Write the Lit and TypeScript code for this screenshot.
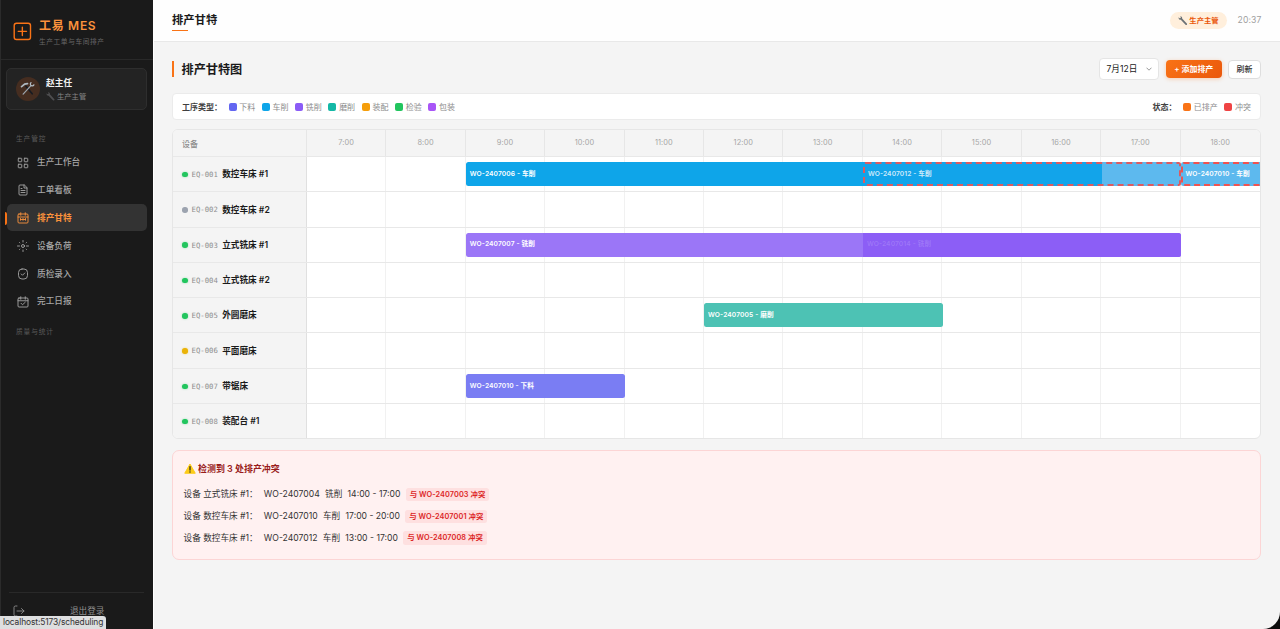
import { LitElement, html, svg, css } from "lit";
import { customElement } from "lit/decorators.js";
import { classMap } from "lit/directives/class-map.js";

interface Bar {
  from: number;
  span: number;
  text: string;
  kind: string;
}

interface Machine {
  id: string;
  name: string;
  state: string;
  bars: Bar[];
}

const HOURS = [7, 8, 9, 10, 11, 12, 13, 14, 15, 16, 17, 18];

const MACHINES: Machine[] = [
  {
    id: "EQ-001", name: "数控车床 #1", state: "ok",
    bars: [
      { from: 9, span: 8, text: "WO-2407006 - 车削", kind: "turn" },
      { from: 14, span: 4, text: "WO-2407012 - 车削", kind: "turn conflict under" },
      { from: 18, span: 1, text: "WO-2407010 - 车削", kind: "turn conflict cut" },
    ],
  },
  { id: "EQ-002", name: "数控车床 #2", state: "idle", bars: [] },
  {
    id: "EQ-003", name: "立式铣床 #1", state: "ok",
    bars: [
      { from: 9, span: 9, text: "WO-2407007 - 铣削", kind: "mill" },
      { from: 14, span: 4, text: "WO-2407014 - 铣削", kind: "mill deep" },
    ],
  },
  { id: "EQ-004", name: "立式铣床 #2", state: "ok", bars: [] },
  {
    id: "EQ-005", name: "外圆磨床", state: "ok",
    bars: [{ from: 12, span: 3, text: "WO-2407005 - 磨削", kind: "grind" }],
  },
  { id: "EQ-006", name: "平面磨床", state: "warn", bars: [] },
  {
    id: "EQ-007", name: "带锯床", state: "ok",
    bars: [{ from: 9, span: 2, text: "WO-2407010 - 下料", kind: "saw" }],
  },
  { id: "EQ-008", name: "装配台 #1", state: "ok", bars: [] },
];

const TYPES = [
  ["下料", "#6366f1"], ["车削", "#0ea5e9"], ["铣削", "#8b5cf6"], ["磨削", "#14b8a6"],
  ["装配", "#f59e0b"], ["检验", "#22c55e"], ["包装", "#a855f7"],
];

const STATES = [["已排产", "#f97316"], ["冲突", "#ef4444"]];

const CONFLICTS = [
  ["设备 立式铣床 #1：", "WO-2407004", "铣削", "14:00 - 17:00", "与 WO-2407003 冲突"],
  ["设备 数控车床 #1：", "WO-2407010", "车削", "17:00 - 20:00", "与 WO-2407001 冲突"],
  ["设备 数控车床 #1：", "WO-2407012", "车削", "13:00 - 17:00", "与 WO-2407008 冲突"],
];

const ICONS: Record<string, unknown> = {
  grid: svg`<rect x="2.5" y="2.5" width="7" height="7" rx="1"/><rect x="14.5" y="2.5" width="7" height="7" rx="1"/><rect x="2.5" y="14.5" width="7" height="7" rx="1"/><rect x="14.5" y="14.5" width="7" height="7" rx="1"/>`,
  doc: svg`<path d="M14 2H6a2 2 0 0 0-2 2v16a2 2 0 0 0 2 2h12a2 2 0 0 0 2-2V8z"/><path d="M14 2v6h6M8 9h2M8 13h8M8 17h8"/>`,
  gantt: svg`<rect x="2" y="4" width="20" height="18" rx="2"/><path d="M7.500 1.500v5M16.500 1.500v5M2 10h20M7 15h10M7 13v3.500M12 13v3.500M17 13v3.500"/>`,
  target: svg`<circle cx="12" cy="12" r="3"/><path d="M12 1v3M12 20v3M1 12h4M19 12h4M5 5l.8.8M18.200 18.200l.8.8M5 19l.8-.8M18.200 5.800l.8-.8"/>`,
  check: svg`<rect x="3" y="2" width="18" height="20" rx="7"/><path d="M8.500 12l2.500 2.500 4.500-4.500"/>`,
  report: svg`<rect x="2" y="4" width="20" height="18" rx="2"/><path d="M7.500 1.500v5M16.500 1.500v5M2 9.500h20M8 14.500l3 3 5.500-5"/>`,
};

const NAV = [
  ["grid", "生产工作台"], ["doc", "工单看板"], ["gantt", "排产甘特"],
  ["target", "设备负荷"], ["check", "质检录入"], ["report", "完工日报"],
];

const wrench = (cls: string) => html`<svg class=${cls} viewBox="0 0 24 24">
  <path fill="currentColor" d="M1.500 3.200 4 5.700l2.500-.8.600-2.400L5 .7c3-.8 6.200 1.700 5.400 5.300L22.300 19.200c1.700 2.400-1.100 5-3.300 3.200L7 9.700C3.700 10.300.7 7 1.500 3.200z"/>
</svg>`;

@customElement("app-root")
export class AppRoot extends LitElement {
  static styles = css`
    :host { display: block; height: 629px; overflow: hidden; position: relative; background: #0c0c0c;
      font-family: Inter, "Noto Sans CJK SC", sans-serif; color: #1a1a1a; line-height: 1; }
    * { box-sizing: border-box; }
    .shell { display: flex; height: 629px; }
    .side { width: 153px; flex: none; background: #1a1a1a; border-left: 1px solid #2b2b2b;
      display: flex; flex-direction: column; }
    .brand { display: flex; align-items: center; gap: 7px; height: 60px; padding: 5px 0 0 12px;
      border-bottom: 1px solid #292929; }
    .mark { width: 19px; height: 19px; flex: none; margin-top: -2px; }
    .brand-text { display: flex; flex-direction: column; gap: 5px; padding-top: 1px; }
    .brand-name { font-size: 12px; font-weight: 600; letter-spacing: .7px; color: #fb923c; height: 14px; line-height: 14px; white-space: nowrap; }
    .brand-sub { font-size: 6.700px; letter-spacing: .6px; color: #676767; height: 9px; line-height: 9px; white-space: nowrap; }
    .user { margin: 8px 6px 0 5px; height: 41.500px; border: 1px solid #2e2e2e; border-radius: 5px;
      background: #232323; display: flex; align-items: center; gap: 6.500px; padding-left: 8.500px; }
    .avatar { width: 24px; height: 24px; border-radius: 50%; background: #452d20; display: flex; align-items: center; justify-content: center; }
    .tools { width: 15px; height: 15px; }
    .user-text { display: flex; flex-direction: column; gap: 4px; padding-top: 1px; }
    .user-name { font-size: 8.700px; font-weight: 600; color: #f0f0f0; height: 10px; line-height: 10px; }
    .user-role { display: flex; align-items: center; gap: 2px; font-size: 7.300px; color: #858585; height: 9px; }
    .wr-dim { width: 9px; height: 9px; color: #4e4e50; }
    .group { font-size: 6.700px; letter-spacing: .9px; color: #5b5b5b; padding-left: 15px; height: 9px; line-height: 9px; }
    .group-a { margin-top: 25px; margin-bottom: 5px; }
    .group-b { margin-top: 13px; }
    .nav { display: flex; flex-direction: column; gap: .85px; padding: 0 6.500px 0 6px; }
    .item { height: 27px; border-radius: 5px; display: flex; align-items: center; gap: 8.500px; padding: 1px 0 0 9.500px;
      color: #a6a6a6; font-size: 8.650px; font-weight: 500; position: relative; }
    .item-on { background: #333; color: #fb923c; font-weight: 600; }
    .item-on::before { content: ""; position: absolute; left: -2px; top: 7.500px; width: 2px; height: 13px; background: #f97316; border-radius: 0 2px 2px 0; }
    .ico { width: 12px; height: 12px; fill: none; stroke: currentColor; stroke-width: 1.800; stroke-linecap: round; stroke-linejoin: round; }
    .logout { margin: auto 9px 0 8px; height: 37px; border-top: 1px solid #292929; display: flex; align-items: flex-start;
      padding: 11.500px 0 0 3.500px; color: #8f8f8f; font-size: 8.650px; line-height: 12px; }
    .logout-text { flex: 1; text-align: center; padding-left: 6px; }
    .main { flex: 1; min-width: 0; background: #f4f4f4; border-left: 1px solid #fff; border-radius: 0 0 17px 0; height: 628.500px; }
    .top { height: 41.500px; background: #fefefe; border-bottom: 1px solid #e8e8e8; display: flex; align-items: center; padding: 0 19px 0 18px; }
    .crumb { font-size: 11.300px; font-weight: 600; height: 24px; line-height: 17px; padding-top: 4px; position: relative; }
    .crumb::after { content: ""; position: absolute; left: 0; bottom: 1px; width: 16px; height: 1.300px; background: #f97316; }
    .grow { flex: 1; }
    .role { height: 16.500px; width: 57px; border-radius: 9px; background: #ffefdc; color: #ea580c; display: flex; align-items: center;
      justify-content: center; gap: 1.500px; font-size: 7.350px; font-weight: 600; margin-right: 10.500px; }
    .wr { width: 9.500px; height: 9.500px; color: #6c7276; }
    .clock { font-size: 8.600px; color: #a0a0a0; letter-spacing: .15px; width: 23.500px; white-space: nowrap; }
    .content { padding: 16.500px 19px 0 18px; }
    .head { display: flex; align-items: center; height: 22px; }
    .accent { width: 2px; height: 16px; background: #f97316; margin-right: 7.500px; }
    .title { font-size: 12.150px; font-weight: 600; height: 16px; line-height: 17px; }
    .select { width: 60px; height: 22px; border: 1px solid #e5e5e5; border-radius: 4px; background: #fff; display: flex; align-items: center;
      justify-content: space-between; padding: 0 6px 0 6.500px; font-size: 8.600px; white-space: nowrap; }
    .chev { width: 6px; height: 6px; fill: none; stroke: #999; stroke-width: 1; }
    .add { width: 55.500px; height: 18.500px; border-radius: 4px; margin-left: 7px; background: linear-gradient(135deg, #f97316, #ea580c); color: #fff;
      font-size: 7.950px; font-weight: 600; display: flex; align-items: center; justify-content: center; box-shadow: 0 1px 4px rgba(249,115,22,.3); white-space: nowrap; padding-top: 1px; }
    .refresh { width: 33px; height: 19px; margin-left: 6.500px; border: 1px solid #dedede; border-radius: 4px; background: #fff; font-size: 7.950px;
      font-weight: 500; display: flex; align-items: center; justify-content: center; color: #333; padding-top: 1px; }
    .legend { margin-top: 12.500px; height: 27.500px; background: #fff; border: 1px solid #ebebeb; border-radius: 4px; display: flex; align-items: center;
      padding: 1px 9px 0; gap: 6.650px; font-size: 8px; color: #8c8c8c; }
    .legend-label { font-weight: 600; color: #404040; width: 40px; white-space: nowrap; }
    .legend-short { width: 24px; }
    .key { display: flex; align-items: center; gap: 2.650px; white-space: nowrap; }
    .swatch { width: 8px; height: 8px; border-radius: 2px; }
    .gantt { margin-top: 9.300px; background: #fff; border: 1px solid #e6e6e6; border-radius: 6px; overflow: hidden; }
    .row { display: flex; height: 35.320px; border-bottom: 1px solid #e8e8e8; }
    .row-last { border-bottom: 0; height: 34px; }
    .row-head { height: 26.600px; background: #f4f4f4; }
    .label { width: 134px; flex: none; background: #f4f4f4; border-right: 1px solid #e0e0e0; display: flex; align-items: center; padding: 1px 0 0 9px; }
    .label-head { font-size: 8px; font-weight: 500; color: #8c8c8c; border-right-color: #e6e6e6; }
    .track { flex: 1; display: grid; grid-template-columns: repeat(12, 1fr); grid-template-rows: 100%; align-items: center; min-width: 0; }
    .cell { grid-row: 1; align-self: stretch; border-right: 1px solid #f1f1f1; }
    .hour { border-right: 1px solid #e6e6e6; display: flex; align-items: center; justify-content: center; font-size: 7.400px; letter-spacing: .1px; color: #a6a6a6; }
    .cell-last { border-right: 0; }
    .dot { width: 5.500px; height: 5.500px; border-radius: 50%; margin-right: 4px; }
    .dot-ok { background: #22c55e; box-shadow: 0 0 2px rgba(34,197,94,.5); }
    .dot-idle { background: #9ca3af; }
    .dot-warn { background: #eab308; box-shadow: 0 0 2px rgba(234,179,8,.5); }
    .eq { font-family: "DejaVu Sans Mono", monospace; font-size: 7.300px; color: #8f8f8f; width: 30.700px; white-space: nowrap; }
    .machine { font-size: 8.650px; font-weight: 600; white-space: nowrap; }
    .bar { grid-row: 1; height: 24px; border-radius: 2.500px; color: #fff; font-size: 6.650px; font-weight: 600; letter-spacing: .12px; display: flex; align-items: center;
      padding-left: 4px; white-space: nowrap; overflow: hidden; margin-right: -.5px; }
    .turn { background: #0ea5e9; z-index: 2; }
    .conflict { border: 2px dashed #ef5350; background: #5db9ee; padding-left: 3px; }
    .under { z-index: 3; color: rgba(255,255,255,.8); background: linear-gradient(90deg, #12a4ea 75%, #5db9ee 75%) border-box; border-color: #dd5a60; }
    .cut { border-right: 0; border-radius: 2.500px 0 0 2.500px; z-index: 3; margin-right: 0; }
    .mill { background: #9b76f7; }
    .deep { background: #8c5ef6; color: rgba(255,255,255,.16); border-radius: 0 2.500px 2.500px 0; z-index: 2; }
    .grind { background: #4dc2b4; }
    .saw { background: #7a7df3; }
    .alert { margin-top: 11px; height: 110px; border: 1px solid #fcd5d5; border-radius: 7px; background: #fff1f1; padding: 12.500px 10.500px; }
    .alert-head { display: flex; align-items: center; gap: 2.500px; font-size: 8.950px; font-weight: 600; color: #991b1b; height: 11px; margin-bottom: 9px; white-space: nowrap; }
    .warn { width: 12px; height: 11px; margin-top: -2px; }
    .line { display: flex; align-items: center; height: 21.800px; font-size: 8.650px; color: #333; gap: 5.300px; white-space: nowrap; }
    .where { width: 75px; }
    .tag { height: 13.500px; padding: 0 4px; border-radius: 2.500px; background: #fee0e0; color: #dc2626; font-size: 7.350px; letter-spacing: .08px; font-weight: 600; display: flex; align-items: center; }
    .status { position: absolute; left: 0; bottom: 0; width: 106px; height: 13.500px; background: #dedfe0; color: #333; border-radius: 0 3px 0 0;
      font-size: 8.400px; letter-spacing: -.1px; line-height: 13px; padding-left: 3px; z-index: 5; white-space: nowrap; }
  `;

  private legendKey([name, color]: string[]) {
    return html`<span class="key"><span class="swatch" style="background:${color}"></span>${name}</span>`;
  }

  private machineRow(m: Machine, i: number) {
    return html`<div class=${classMap({ row: true, "row-last": i === MACHINES.length - 1 })}>
      <div class="label"><span class="dot dot-${m.state}"></span><span class="eq">${m.id}</span><span class="machine">${m.name}</span></div>
      <div class="track">
        ${HOURS.map((h, c) => html`<div class=${classMap({ cell: true, "cell-last": h === 18 })} style="grid-column:${c + 1}"></div>`)}
        ${m.bars.map((b) => html`<div class="bar ${b.kind}" style="grid-column:${b.from - 6} / span ${b.span}">${b.text}</div>`)}
      </div>
    </div>`;
  }

  render() {
    return html`
      <div class="shell">
        <aside class="side">
          <div class="brand">
            <svg class="mark" viewBox="0 0 19 19" fill="none" stroke="#f97316" stroke-width="1.4" stroke-linecap="round">
              <rect x="1.200" y="1.200" width="16.300" height="16.300" rx="2.300"/><path d="M9.350 5.200v8.300M5.200 9.350h8.300"/>
            </svg>
            <div class="brand-text"><span class="brand-name">工易 MES</span><span class="brand-sub">生产工单与车间排产</span></div>
          </div>
          <div class="user">
            <div class="avatar">
              <svg class="tools" viewBox="0 0 24 24" fill="none" stroke-linecap="round">
                <path d="M9.500 8.500 19.500 20.500" stroke="#171b22" stroke-width="2.600"/>
                <path d="M5 21 17.500 7.500" stroke="#9ba5ad" stroke-width="2"/>
                <path d="M17.500 2.500c-1.800 2-.8 5 1.500 5.300 1.200.2 2.600-.4 3.200-1.600" stroke="#b4bdc4" stroke-width="2"/>
                <path d="M2.500 9 7.500 5l4.500-.8" stroke="#aeb8c0" stroke-width="2.800"/>
              </svg>
            </div>
            <div class="user-text"><span class="user-name">赵主任</span><span class="user-role">${wrench("wr-dim")}生产主管</span></div>
          </div>
          <div class="group group-a">生产管控</div>
          <nav class="nav">
            ${NAV.map(([icon, name]) => html`<div class=${classMap({ item: true, "item-on": icon === "gantt" })}>
              <svg class="ico" viewBox="0 0 24 24">${ICONS[icon]}</svg><span>${name}</span></div>`)}
          </nav>
          <div class="group group-b">质量与统计</div>
          <div class="logout">
            <svg class="ico" viewBox="0 0 24 24"><path d="M8 2H5a3 3 0 0 0-3 3v14a3 3 0 0 0 3 3h3M8 12h14M17 7l5 5-5 5"/></svg>
            <span class="logout-text">退出登录</span>
          </div>
        </aside>
        <main class="main">
          <header class="top">
            <span class="crumb">排产甘特</span><span class="grow"></span>
            <span class="role">${wrench("wr")}生产主管</span><span class="clock">20:37</span>
          </header>
          <section class="content">
            <div class="head">
              <span class="accent"></span><span class="title">排产甘特图</span><span class="grow"></span>
              <span class="select">7月12日<svg class="chev" viewBox="0 0 6 6"><path d="M.5 1.700 3 4.200l2.500-2.500"/></svg></span>
              <span class="add">+ 添加排产</span><span class="refresh">刷新</span>
            </div>
            <div class="legend">
              <span class="legend-label">工序类型：</span>${TYPES.map(this.legendKey)}<span class="grow"></span>
              <span class="legend-label legend-short">状态：</span>${STATES.map(this.legendKey)}
            </div>
            <div class="gantt">
              <div class="row row-head">
                <div class="label label-head">设备</div>
                <div class="track">${HOURS.map((h) => html`<div class=${classMap({ cell: true, hour: true, "cell-last": h === 18 })}>${h}:00</div>`)}</div>
              </div>
              ${MACHINES.map((m, i) => this.machineRow(m, i))}
            </div>
            <div class="alert">
              <div class="alert-head">
                <svg class="warn" viewBox="0 0 24 22"><path d="M12 2 22.500 20.500h-21z" fill="#fccc18" stroke="#fccc18" stroke-width="2" stroke-linejoin="round"/><path d="M12 7.500v6.500" stroke="#2b2a22" stroke-width="2.600" stroke-linecap="round"/><circle cx="12" cy="18" r="1.500" fill="#2b2a22"/></svg>
                <span>检测到 3 处排产冲突</span>
              </div>
              ${CONFLICTS.map(([where, wo, op, time, tag]) => html`<div class="line">
                <span class="where">${where}</span><span>${wo}</span><span>${op}</span><span>${time}</span><span class="tag">${tag}</span></div>`)}
            </div>
          </section>
        </main>
      </div>
      <div class="status">localhost:5173/scheduling</div>
    `;
  }
}
